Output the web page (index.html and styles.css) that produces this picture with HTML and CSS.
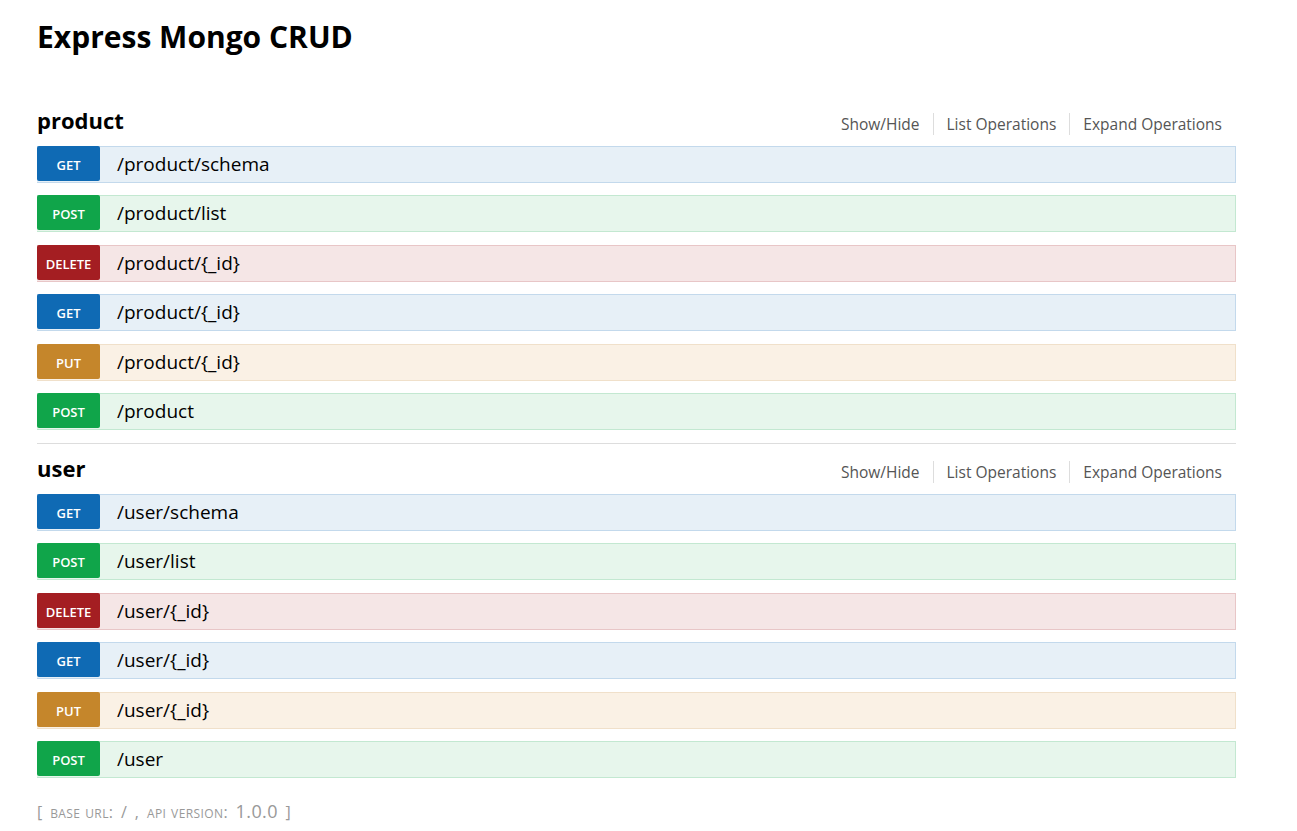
FILE: index.html
```html
<!DOCTYPE html>
<html>
<head>
<meta charset="utf-8">
<link rel="stylesheet" href="styles.css">
</head>
<body>
<div class="wrap">
  <h1 class="title">Express Mongo CRUD</h1>
  <ul class="resources">
    <li class="resource">
      <div class="res-head">
        <h2 class="res-name">product</h2>
        <ul class="options">
          <li>Show/Hide</li>
          <li>List Operations</li>
          <li>Expand Operations</li>
        </ul>
      </div>
      <ul class="ops">
        <li class="op get"><span class="method">GET</span><span class="path">/product/schema</span></li>
        <li class="op post"><span class="method">POST</span><span class="path">/product/list</span></li>
        <li class="op delete"><span class="method">DELETE</span><span class="path">/product/{_id}</span></li>
        <li class="op get"><span class="method">GET</span><span class="path">/product/{_id}</span></li>
        <li class="op put"><span class="method">PUT</span><span class="path">/product/{_id}</span></li>
        <li class="op post"><span class="method">POST</span><span class="path">/product</span></li>
      </ul>
    </li>
    <li class="resource">
      <div class="res-head">
        <h2 class="res-name">user</h2>
        <ul class="options">
          <li>Show/Hide</li>
          <li>List Operations</li>
          <li>Expand Operations</li>
        </ul>
      </div>
      <ul class="ops">
        <li class="op get"><span class="method">GET</span><span class="path">/user/schema</span></li>
        <li class="op post"><span class="method">POST</span><span class="path">/user/list</span></li>
        <li class="op delete"><span class="method">DELETE</span><span class="path">/user/{_id}</span></li>
        <li class="op get"><span class="method">GET</span><span class="path">/user/{_id}</span></li>
        <li class="op put"><span class="method">PUT</span><span class="path">/user/{_id}</span></li>
        <li class="op post"><span class="method">POST</span><span class="path">/user</span></li>
      </ul>
    </li>
  </ul>
  <div class="footer">[ <span class="sc">base url</span>: / , <span class="sc">api version</span>: <span class="ver">1.0.0</span> ]</div>
</div>
</body>
</html>
```
FILE: styles.css
```css
html, body {
  margin: 0;
  padding: 0;
  background: #fff;
}
body {
  font-family: "Open Sans", "DejaVu Sans", sans-serif;
  color: #000;
}
ul {
  list-style: none;
  margin: 0;
  padding: 0;
}
.wrap {
  width: 1199px;
  padding: 0 0 0 37px;
}
.title {
  margin: 0;
  padding-top: 15px;
  font-size: 30px;
  font-weight: 700;
  line-height: 44px;
  height: 88px;
  box-sizing: content-box;
}
.resource {
  border-bottom: 1px solid #ddd;
  margin-bottom: 7px;
}
.resource:last-child {
  border-bottom: none;
}
.res-head {
  display: flex;
  justify-content: space-between;
  align-items: center;
  height: 40px;
  margin-bottom: 3px;
}
.res-name {
  margin: 0;
  font-size: 22px;
  font-weight: 700;
  line-height: 30px;
  padding-bottom: 6px;
}
.options {
  display: flex;
  padding-right: 14px;
  padding-top: 2px;
}
.options li {
  font-size: 15.5px;
  color: #555;
  padding: 0 13px;
  border-left: 1px solid #ddd;
  line-height: 22px;
}
.options li:first-child {
  border-left: none;
}
.options li:last-child {
  padding-right: 0;
}
.op {
  display: flex;
  align-items: center;
  height: 35px;
  border: 1px solid;
  border-left: none;
  margin-bottom: 12.4px;
}
.resource:first-child .op:last-child {
  margin-bottom: 13px;
}
.method {
  width: 63px;
  height: 35px;
  margin-top: -1px;
  margin-bottom: 1px;
  border-radius: 2px;
  color: #fff;
  font-size: 13px;
  font-weight: 600;
  text-transform: uppercase;
  display: flex;
  align-items: center;
  justify-content: center;
  padding-top: 3px;
  box-sizing: border-box;
}
.path {
  font-size: 19px;
  padding-left: 17px;
  line-height: 35px;
}
.get { background: #e7f0f7; border-color: #c3d9ec; }
.get .method { background: #0f6ab4; }
.post { background: #e7f6ec; border-color: #c3e8d1; }
.post .method { background: #10a54a; }
.delete { background: #f5e6e6; border-color: #e8c6c7; }
.delete .method { background: #a41e22; }
.put { background: #faf1e5; border-color: #f0e0ca; }
.put .method { background: #c5862b; }
.footer {
  margin-top: 21px;
  color: #999;
  font-size: 16px;
  line-height: 24px;
  letter-spacing: 0.4px;
  word-spacing: 3px;
}
.sc {
  font-variant: small-caps;
  text-transform: lowercase;
  font-size: 17px;
  word-spacing: 0;
}
.ver {
  font-size: 18px;
}
```
